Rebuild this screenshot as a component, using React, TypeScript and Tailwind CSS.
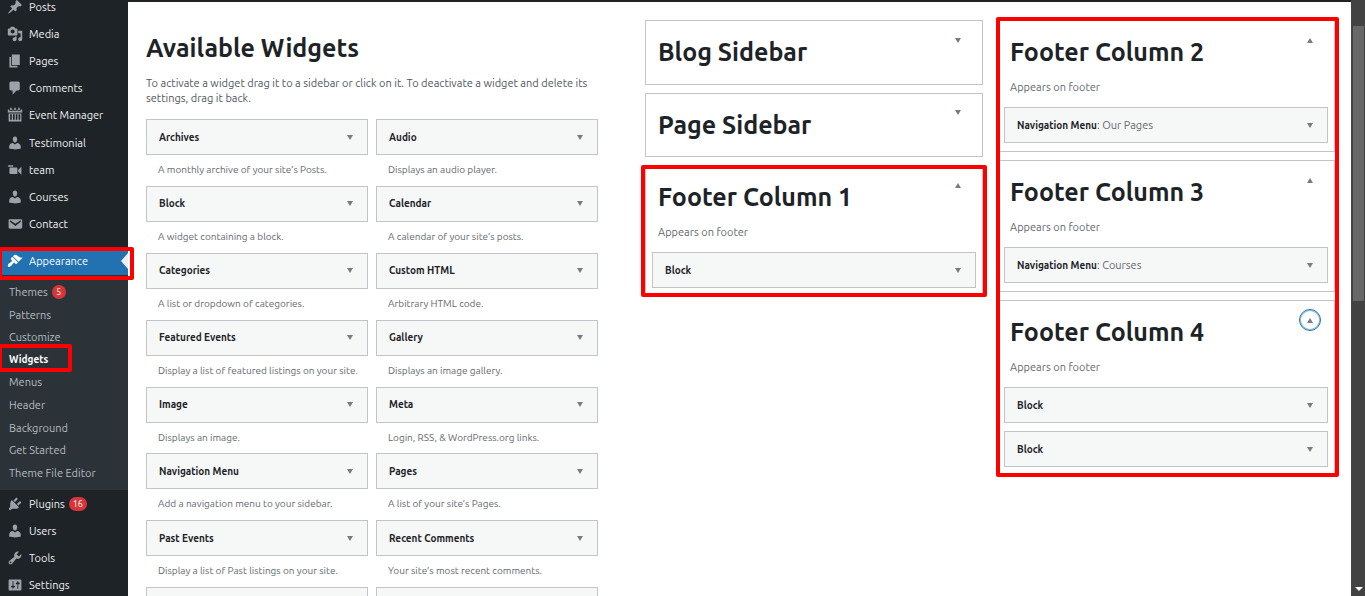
import React from "react";

const icons = {
  post: "M10.44 3.02l1.82-1.82 6.36 6.35-1.83 1.82c-1.05-.68-2.48-.57-3.41.36l-.75.75c-.92.93-1.04 2.35-.35 3.41l-1.83 1.82-2.41-2.41-2.8 2.79c-.42.42-3.38 2.71-3.8 2.29s1.86-3.39 2.28-3.81l2.79-2.79L4.1 9.36l1.83-1.82c1.05.69 2.48.57 3.4-.36l.75-.75c.93-.92 1.05-2.35.36-3.41z",
  media: "M13 11V4c0-.55-.45-1-1-1h-1.67L9 1H5L3.67 3H2c-.55 0-1 .45-1 1v7c0 .55.45 1 1 1h10c.55 0 1-.45 1-1zM7 4.5c1.38 0 2.5 1.12 2.5 2.5S8.38 9.5 7 9.5 4.5 8.38 4.5 7 5.62 4.5 7 4.5zM14 6h5v10.5c0 1.38-1.12 2.5-2.5 2.5S14 17.88 14 16.5s1.12-2.5 2.5-2.5c.17 0 .34.02.5.05V9h-3V6zm-4 8.05V13h2v3.5c0 1.38-1.12 2.5-2.5 2.5S7 17.88 7 16.5 8.12 14 9.5 14c.17 0 .34.02.5.05z",
  page: "M6 15V2h10v13H6zm-1 1h8v2H3V5h2v11z",
  comments: "M5 2h9c1.1 0 2 .9 2 2v7c0 1.1-.9 2-2 2h-2l-5 5v-5H5c-1.1 0-2-.9-2-2V4c0-1.1.9-2 2-2z",
  calendar: "M4 1h2v3H4zM9 1h2v3H9zM14 1h2v3h-2zM1 3h2v2h4V3h1v2h4V3h1v2h4V3h2v4H1zM2 8h16v10H2zM4 9v7h2V9zm3.5 0v7h2V9zm3.5 0v7h2V9zm3.500 0v7h2V9z",
  users: "M10 9.25c-2.27 0-2.73-3.44-2.73-3.44C7 4.02 7.82 2 9.97 2c2.16 0 2.98 2.02 2.71 3.81 0 0-.41 3.44-2.68 3.44zm0 2.57L12.72 10c2.39 0 4.52 2.33 4.52 4.53v2.49s-3.65 1.13-7.24 1.13c-3.65 0-7.24-1.13-7.24-1.13v-2.49c0-2.25 1.94-4.48 4.47-4.48z",
  video: "M8 5c0-.55-.45-1-1-1H2c-.55 0-1 .45-1 1 0 .57.49 1 1 1h5c.55 0 1-.45 1-1zm6 5l4-4v10l-4-4v-2zm-1 4V8c0-.55-.45-1-1-1H4c-.55 0-1 .45-1 1v6c0 .55.45 1 1 1h8c.55 0 1-.45 1-1z",
  email: "M3.87 4h13.25C18.37 4 19 4.59 19 5.79v8.42c0 1.19-.63 1.79-1.88 1.79H3.87c-1.25 0-1.88-.6-1.88-1.79V5.79c0-1.2.63-1.79 1.88-1.79zm6.62 8.6l6.74-5.53c.24-.2.43-.66.13-1.07-.29-.41-.82-.42-1.17-.17l-5.7 3.86L4.8 5.83c-.35-.25-.88-.24-1.17.17-.3.41-.11.87.13 1.07z",
  appearance: "M14.48 11.06L7.41 3.99l1.5-1.5c.5-.56 2.3-.47 3.51.32 1.21.8 1.43 1.28 2.91 2.1 1.18.64 2.45 1.26 4.45.85zm-.71.71L6.7 4.7 4.93 6.47c-.39.39-.39 1.02 0 1.41l1.06 1.06c.39.39.39 1.03 0 1.42-.6.6-1.43 1.11-2.21 1.69-.35.26-.7.53-1.01.84C1.43 14.23.4 16.08 1.4 17.07c.99 1 2.84-.03 4.18-1.36.31-.31.58-.66.85-1.02.57-.78 1.08-1.61 1.69-2.21.39-.39 1.02-.39 1.41 0l1.06 1.06c.39.39 1.02.39 1.41 0z",
  plugins: "M13.11 4.36L9.87 7.6 8 5.73l3.24-3.24c.35-.34 1.05-.2 1.56.32.52.51.66 1.21.31 1.55zm-8 1.77l.91-1.12 9.01 9.01-1.19.84c-.71.71-2.63 1.16-3.82 1.16H6.14L4.9 17.26c-.59.59-1.54.59-2.12 0-.59-.58-.59-1.53 0-2.12l1.24-1.24v-3.88c0-1.13.4-3.19 1.09-3.89zm7.26 3.97l3.24-3.24c.34-.35 1.04-.21 1.55.31.52.51.66 1.21.31 1.55l-3.24 3.25z",
  tools: "M16.68 9.77c-1.34 1.34-3.3 1.67-4.95.99l-5.41 6.52c-.99.99-2.59.99-3.58 0s-.99-2.59 0-3.57l6.52-5.42c-.68-1.65-.35-3.61.99-4.95 1.28-1.28 3.12-1.62 4.72-1.06l-2.89 2.89 2.82 2.82 2.86-2.87c.53 1.58.18 3.39-1.08 4.65zM3.81 16.21c.4.39 1.04.39 1.43 0 .4-.4.4-1.04 0-1.43-.39-.4-1.03-.4-1.43 0-.39.39-.39 1.03 0 1.43z",
  settings: "M18 16V4c0-.55-.45-1-1-1H3c-.55 0-1 .45-1 1v12c0 .55.45 1 1 1h14c.55 0 1-.45 1-1zM8 11h1c.55 0 1 .45 1 1s-.45 1-1 1H8v1.5c0 .28-.22.5-.5.5s-.5-.22-.5-.5V13H6c-.55 0-1-.45-1-1s.45-1 1-1h1V5.5c0-.28.22-.5.5-.5s.5.22.5.5V11zm5-2h-1c-.55 0-1-.45-1-1s.45-1 1-1h1V5.5c0-.28.22-.5.5-.5s.5.22.5.5V7h1c.55 0 1 .45 1 1s-.45 1-1 1h-1v5.5c0 .28-.22.5-.5.5s-.5-.22-.5-.5V9z",
};

type IconName = keyof typeof icons;
type MenuEntry = { icon: IconName; label: string; badge?: string };

const contentMenu: MenuEntry[] = [
  { icon: "post", label: "Posts" },
  { icon: "media", label: "Media" },
  { icon: "page", label: "Pages" },
  { icon: "comments", label: "Comments" },
  { icon: "calendar", label: "Event Manager" },
  { icon: "users", label: "Testimonial" },
  { icon: "video", label: "team" },
  { icon: "users", label: "Courses" },
  { icon: "email", label: "Contact" },
];

const adminMenu: MenuEntry[] = [
  { icon: "plugins", label: "Plugins", badge: "16" },
  { icon: "users", label: "Users" },
  { icon: "tools", label: "Tools" },
  { icon: "settings", label: "Settings" },
];

const appearanceMenu = [
  "Themes",
  "Patterns",
  "Customize",
  "Widgets",
  "Menus",
  "Header",
  "Background",
  "Get Started",
  "Theme File Editor",
];

const widgets = [
  ["Archives", "A monthly archive of your site’s Posts."],
  ["Audio", "Displays an audio player."],
  ["Block", "A widget containing a block."],
  ["Calendar", "A calendar of your site’s posts."],
  ["Categories", "A list or dropdown of categories."],
  ["Custom HTML", "Arbitrary HTML code."],
  ["Featured Events", "Display a list of featured listings on your site."],
  ["Gallery", "Displays an image gallery."],
  ["Image", "Displays an image."],
  ["Meta", "Login, RSS, & WordPress.org links."],
  ["Navigation Menu", "Add a navigation menu to your sidebar."],
  ["Pages", "A list of your site’s Pages."],
  ["Past Events", "Display a list of Past listings on your site."],
  ["Recent Comments", "Your site’s most recent comments."],
  ["", ""],
  ["", ""],
];

function Icon({ name }: { name: IconName }) {
  return (
    <svg viewBox="0 0 20 20" className="size-4 shrink-0" fill="currentColor" fillRule="evenodd" aria-hidden="true">
      <path d={icons[name]} />
    </svg>
  );
}

function Caret({ up = false }: { up?: boolean }) {
  return (
    <svg viewBox="0 0 6 5" className="h-[5px] w-[6px] shrink-0 text-[#787c82]" fill="currentColor" aria-hidden="true">
      <path d={up ? "M3 0L6 5H0z" : "M0 0H6L3 5z"} />
    </svg>
  );
}

function Badge({ children }: { children: React.ReactNode }) {
  return (
    <span className="flex h-[14px] min-w-[14px] items-center justify-center rounded-full bg-[#d63638] px-1 text-[9px] text-white">
      {children}
    </span>
  );
}

function MenuItem({ icon, label, badge }: MenuEntry) {
  return (
    <li className="flex">
      <a href="#" className="flex flex-1 items-center gap-[6px] pl-[7px] text-[#f0f0f1]">
        <span className="text-[#9ca2a7]">
          <Icon name={icon} />
        </span>
        <span className="flex items-center gap-1">
          {label}
          {badge && <Badge>{badge}</Badge>}
        </span>
      </a>
    </li>
  );
}

function Sidebar() {
  return (
    <nav className="w-32 shrink-0 bg-[#1d2327] text-[11px] leading-4">
      <ul className="-mt-[7px] grid min-h-[245px] auto-rows-fr">
        {contentMenu.map((m) => (
          <MenuItem key={m.label} {...m} />
        ))}
      </ul>
      <div className="relative mt-[9px]">
        <a href="#" className="flex h-7 items-center gap-[6px] bg-[#2271b1] pl-[7px] text-white">
          <Icon name="appearance" />
          <span>Appearance</span>
        </a>
        <svg viewBox="0 0 7 16" className="absolute top-[6px] right-0 h-4 w-[7px] text-[#f0f0f1]" fill="currentColor" aria-hidden="true">
          <path d="M7 0V16L0 8z" />
        </svg>
        <div className="pointer-events-none absolute top-0 -right-[6px] -left-[2px] z-10 h-[33px] rounded-[2px] border-4 border-[#ff0000]" />
      </div>
      <ul className="grid min-h-[215px] auto-rows-fr bg-[#2c3338] py-[6px]">
        {appearanceMenu.map((label) => {
          const current = label === "Widgets";
          return (
            <li key={label} className="relative flex">
              <a
                href="#"
                className={`flex flex-1 items-center gap-1 pl-[9px] ${current ? "text-[10px] font-bold text-white" : "text-[#b5bbc1]"}`}
              >
                {label}
                {label === "Themes" && <Badge>5</Badge>}
              </a>
              {current && (
                <div className="pointer-events-none absolute -top-[5px] -left-[2px] h-7 w-[74px] rounded-[2px] border-4 border-[#ff0000]" />
              )}
            </li>
          );
        })}
      </ul>
      <ul className="grid min-h-[109px] auto-rows-fr">
        {adminMenu.map((m) => (
          <MenuItem key={m.label} {...m} />
        ))}
      </ul>
    </nav>
  );
}

function WidgetBar({ title, detail }: { title: string; detail?: string }) {
  return (
    <button
      type="button"
      className="flex h-9 w-full items-center justify-between border border-[#c3c4c7] bg-[#f6f7f7] pr-[14px] pl-3 text-left text-[10px] text-[#1d2327]"
    >
      <span>
        <span className="font-semibold">{title}</span>
        {detail && <span className="text-[11px] text-[#646970]">: {detail}</span>}
      </span>
      <Caret />
    </button>
  );
}

type AreaProps = {
  title: string;
  description?: string;
  open?: boolean;
  focused?: boolean;
  children?: React.ReactNode;
};

function Area({ title, description, open = false, focused = false, children }: AreaProps) {
  return (
    <section className="border border-[#c3c4c7] bg-white px-[6px]">
      <div className="flex justify-between pl-[6px]">
        <h2 className="py-[13px] text-[25px] leading-9 font-semibold text-[#1d2327]">{title}</h2>
        <button
          type="button"
          aria-label={`Toggle ${title}`}
          className={`mt-2 mr-[7px] flex size-[22px] items-center justify-center rounded-full ${focused ? "border border-[#2271b1] inset-ring-1 inset-ring-[#2271b1]/50" : ""}`}
        >
          <Caret up={open} />
        </button>
      </div>
      {open && (
        <>
          <p className="-mt-1 pb-[12px] pl-[6px] text-[11px] leading-4 text-[#646970]">{description}</p>
          <div className="flex flex-col gap-2 pb-2">{children}</div>
        </>
      )}
    </section>
  );
}

export default function App() {
  return (
    <div className="flex h-screen overflow-hidden bg-white font-['Ubuntu','Noto_Sans',sans-serif]">
      <Sidebar />
      <main className="min-w-0 flex-1 border-t-2 border-[#1d2327] pr-4 pl-[18px]">
        <div className="grid grid-cols-[452fr_690fr] gap-[47px]">
          <section className="pt-7">
            <h1 className="text-[25px] leading-9 font-semibold text-[#1d2327]">Available Widgets</h1>
            <p className="pt-[10px] pb-[13px] text-[11px] leading-[15px] text-[#50575e]">
              To activate a widget drag it to a sidebar or click on it. To deactivate a widget and delete its settings,
              drag it back.
            </p>
            <div className="grid min-h-[535px] auto-rows-fr grid-cols-2 gap-x-2">
              {widgets.map(([title, text], i) => (
                <div key={i}>
                  <WidgetBar title={title} />
                  <p className="pt-[7px] pl-3 text-[10px] leading-4 text-[#646970]">{text}</p>
                </div>
              ))}
            </div>
          </section>
          <div className="grid grid-cols-2 items-start gap-[14px] pt-[18px]">
            <div className="flex flex-col gap-2">
              <div className="grid min-h-[137px] auto-rows-fr gap-2">
                <Area title="Blog Sidebar" />
                <Area title="Page Sidebar" />
              </div>
              <div className="relative">
                <Area title="Footer Column 1" description="Appears on footer" open>
                  <WidgetBar title="Block" />
                </Area>
                <div className="pointer-events-none absolute -inset-x-1 inset-y-0 rounded-[2px] border-4 border-[#ff0000]" />
              </div>
            </div>
            <div className="relative flex flex-col gap-2">
              <Area title="Footer Column 2" description="Appears on footer" open>
                <WidgetBar title="Navigation Menu" detail="Our Pages" />
              </Area>
              <Area title="Footer Column 3" description="Appears on footer" open>
                <WidgetBar title="Navigation Menu" detail="Courses" />
              </Area>
              <Area title="Footer Column 4" description="Appears on footer" open focused>
                <WidgetBar title="Block" />
                <WidgetBar title="Block" />
              </Area>
              <div className="pointer-events-none absolute -top-[3px] -right-1 -bottom-px -left-px rounded-[2px] border-4 border-[#ff0000]" />
            </div>
          </div>
        </div>
      </main>
      <div className="flex w-[14px] shrink-0 flex-col justify-between bg-[#424242] pt-[26px] pr-px pb-[5px] pl-[2px]">
        <div className="h-[275px] bg-[#686868]" />
        <svg viewBox="0 0 8 4" className="h-1 w-2 self-center text-white" fill="currentColor" aria-hidden="true">
          <path d="M0 0H8L4 4z" />
        </svg>
      </div>
    </div>
  );
}
